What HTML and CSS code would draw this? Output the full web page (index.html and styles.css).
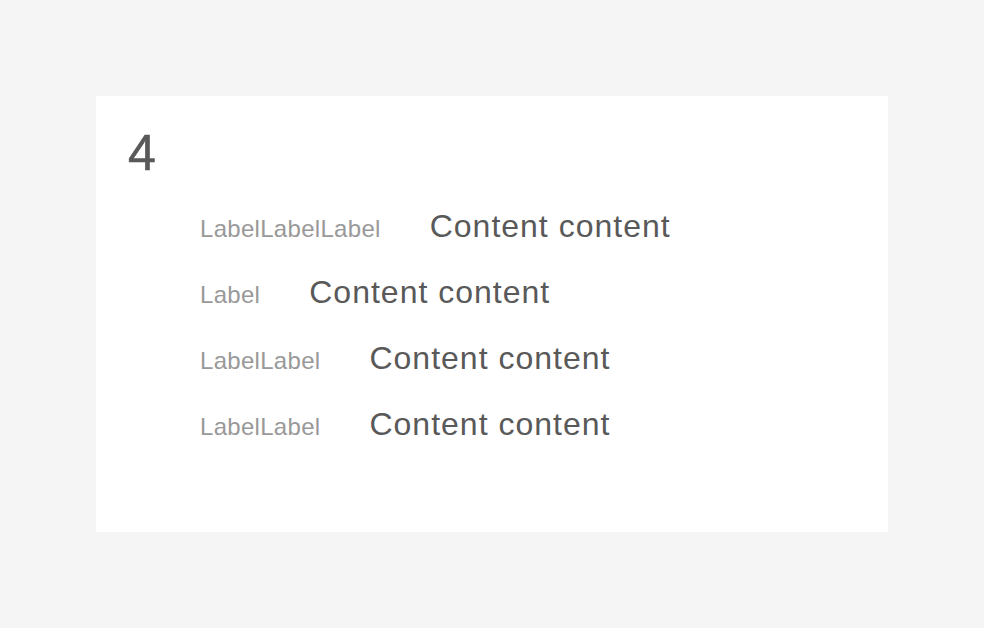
FILE: index.html
```html
<!DOCTYPE html>
<html lang="en">
<head>
    <meta charset="UTF-8">
    <title>Descriptions</title>
    <link rel="stylesheet" href="styles.css">
</head>
<body>
    <div class="card">
        <h1 class="card-title">4</h1>
        <div class="desc-list">
            <div class="desc-row">
                <span class="desc-label">LabelLabelLabel</span>
                <span class="desc-content">Content content</span>
            </div>
            <div class="desc-row">
                <span class="desc-label">Label</span>
                <span class="desc-content">Content content</span>
            </div>
            <div class="desc-row">
                <span class="desc-label">LabelLabel</span>
                <span class="desc-content">Content content</span>
            </div>
            <div class="desc-row">
                <span class="desc-label">LabelLabel</span>
                <span class="desc-content">Content content</span>
            </div>
        </div>
    </div>
</body>
</html>
```

FILE: styles.css
```css
* {
    margin: 0;
    padding: 0;
    box-sizing: border-box;
}

body {
    font-family: 'Liberation Sans', Arial, sans-serif;
    background-color: #f5f5f5;
    padding: 96px;
}

.card {
    background: #fff;
    min-height: 436px;
    padding: 32px;
}

.card-title {
    font-size: 50px;
    line-height: 50px;
    font-weight: normal;
    color: #595959;
    -webkit-text-stroke: 0.6px #595959;
}

.desc-list {
    display: flex;
    flex-direction: column;
    gap: 26px;
    margin-top: 28px;
    padding-left: 72px;
}

.desc-row {
    display: flex;
    align-items: baseline;
    gap: 49px;
    height: 40px;
}

.desc-label {
    font-size: 24px;
    letter-spacing: 0.3px;
    color: #999;
}

.desc-content {
    font-size: 32px;
    line-height: 40px;
    letter-spacing: 1px;
    color: #595959;
}
```
